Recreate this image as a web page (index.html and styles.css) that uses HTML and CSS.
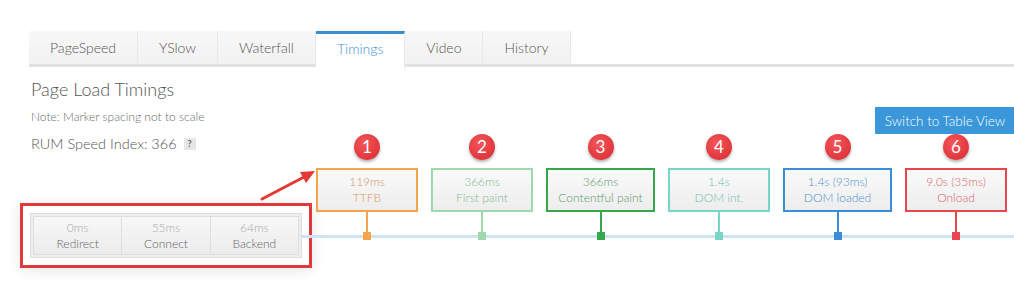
FILE: index.html
```html
<!DOCTYPE html>
<html lang="en">
<head>
  <meta charset="UTF-8">
  <title>Page Load Timings</title>
  <link rel="stylesheet" href="styles.css">
</head>
<body>

  <div class="tabs">
    <div class="tab">PageSpeed</div>
    <div class="tab">YSlow</div>
    <div class="tab">Waterfall</div>
    <div class="tab active">Timings</div>
    <div class="tab">Video</div>
    <div class="tab">History</div>
  </div>

  <div class="main">
    <div class="left">
      <h2>Page Load Timings</h2>
      <p class="note">Note: Marker spacing not to scale</p>
      <p class="rum">RUM Speed Index: 366 <span class="help">?</span></p>

      <!-- fases antes do primeiro byte -->
      <div class="phases">
        <div class="phase"><span class="val">0ms</span><span>Redirect</span></div>
        <div class="phase"><span class="val">55ms</span><span>Connect</span></div>
        <div class="phase"><span class="val">64ms</span><span>Backend</span></div>
      </div>
    </div>

    <div class="right">
      <div class="actions">
        <button class="switch">Switch to Table View</button>
      </div>
      <div class="timeline">
        <div class="mark c-orange">
          <div class="badge">1</div>
          <div class="box">119ms<br>TTFB</div>
          <div class="stem"></div><div class="dot"></div>
        </div>
        <div class="mark c-lgreen">
          <div class="badge">2</div>
          <div class="box">366ms<br>First paint</div>
          <div class="stem"></div><div class="dot"></div>
        </div>
        <div class="mark c-green">
          <div class="badge">3</div>
          <div class="box wide">366ms<br>Contentful paint</div>
          <div class="stem"></div><div class="dot"></div>
        </div>
        <div class="mark c-teal">
          <div class="badge">4</div>
          <div class="box">1.4s<br>DOM int.</div>
          <div class="stem"></div><div class="dot"></div>
        </div>
        <div class="mark c-blue">
          <div class="badge">5</div>
          <div class="box wide">1.4s (93ms)<br>DOM loaded</div>
          <div class="stem"></div><div class="dot"></div>
        </div>
        <div class="mark c-red">
          <div class="badge">6</div>
          <div class="box">9.0s (35ms)<br>Onload</div>
          <div class="stem"></div><div class="dot"></div>
        </div>
      </div>
    </div>
  </div>

  <!-- seta de anotação -->
  <svg class="arrow" width="64" height="40" viewBox="0 0 64 40">
    <line x1="4" y1="34" x2="46" y2="12" stroke="#e53935" stroke-width="3" stroke-linecap="round"/>
    <polygon points="57,6 42,7 48,18" fill="#e53935"/>
  </svg>

</body>
</html>
```

FILE: styles.css
```css
html, body {
  min-height: 296px;
}
body {
  margin: 0;
  font-family: Lato, "Liberation Sans", sans-serif;
  font-weight: 300;
  color: #555;
  background: #fff;
  position: relative;
}

.tabs {
  display: flex;
  margin: 31px 0 0 29px;
  border-bottom: 3px solid #e2e2e2;
  height: 33px;
}
.tab {
  padding: 0 21px;
  font-size: 14px;
  line-height: 33px;
  color: #555;
  background: linear-gradient(#f8f8f8, #f1f1f1);
  border-right: 1px solid #e8e8e8;
}
.tab.active {
  background: #fff;
  color: #3a8fd3;
  border-top: 3px solid #3a8fd3;
  line-height: 30px;
  height: 33px;
  margin-bottom: -3px;
  padding-bottom: 3px;
}

.main {
  display: flex;
  margin-top: 11px;
}

.left {
  width: 272px;
  padding-left: 30px;
  flex-shrink: 0;
}
.left h2 {
  margin: 0 0 0 1px;
  font-size: 18px;
  font-weight: 300;
  line-height: 22px;
  color: #555;
}
.note {
  margin: 9px 0 0 1px;
  font-size: 12px;
  line-height: 16px;
  color: #6a6a6a;
}
.rum {
  margin: 10px 0 0 1px;
  font-size: 14.5px;
  line-height: 18px;
  color: #555;
}
.help {
  display: inline-block;
  width: 12px;
  height: 12px;
  margin-left: 3px;
  background: #e6e6e6;
  color: #666;
  font-size: 9px;
  font-weight: bold;
  line-height: 12px;
  text-align: center;
  vertical-align: 2px;
}

.phases {
  display: flex;
  margin-top: 60px;
  height: 45px;
  box-sizing: border-box;
  border: 1px solid #dcdcdc;
  padding: 2px;
  background: #eee;
  outline: 3px solid #e2383d;
  outline-offset: 7px;
  box-shadow: 0 0 0 10px #fff, 0 2px 14px 9px rgba(0, 0, 0, 0.12);
}
.phase {
  flex: 1;
  display: flex;
  flex-direction: column;
  justify-content: center;
  align-items: center;
  font-size: 12px;
  line-height: 16px;
  color: #666;
  background: linear-gradient(#f7f7f7, #ececec);
  border: 1px solid #dedede;
}
.phase + .phase {
  border-left: none;
}
.phase .val {
  color: #aaa;
}

.right {
  flex: 1;
  margin-top: 29px;
}
.actions {
  display: flex;
  justify-content: flex-end;
}
.switch {
  width: 140px;
  height: 27px;
  margin-right: -1px;
  border: none;
  background: #3997da;
  color: #fff;
  font-family: Lato, "Liberation Sans", sans-serif;
  font-weight: 300;
  font-size: 13.5px;
  padding: 0;
}

.timeline {
  position: relative;
  display: flex;
  gap: 13px;
  padding-left: 14px;
}
.timeline::before {
  content: "";
  position: absolute;
  left: 0;
  right: 0;
  top: 101px;
  height: 3px;
  background: #cfe4f2;
}
.mark {
  position: relative;
  display: flex;
  flex-direction: column;
  align-items: center;
}
.badge {
  width: 26px;
  height: 26px;
  border-radius: 50%;
  background: radial-gradient(circle at 40% 35%, #f4555a, #d62a30);
  box-shadow: 0 2px 3px rgba(0, 0, 0, 0.3);
  color: #fff;
  font-size: 17px;
  font-weight: normal;
  line-height: 26px;
  text-align: center;
}
.box {
  width: 102px;
  height: 44px;
  margin-top: 8px;
  box-sizing: border-box;
  border: 2px solid;
  background: linear-gradient(#fafafa, #ededed);
  font-size: 12px;
  line-height: 16px;
  text-align: center;
  padding-top: 4px;
}
.box.wide {
  width: 109px;
}
.stem {
  width: 2px;
  height: 20px;
}
.dot {
  width: 8px;
  height: 8px;
}

.c-orange .box { border-color: #f6a44c; color: #d9936a; }
.c-orange .stem, .c-orange .dot { background: #f6a44c; }
.c-lgreen .box { border-color: #9fd8aa; color: #84b98e; }
.c-lgreen .stem, .c-lgreen .dot { background: #9fd8aa; }
.c-green .box { border-color: #35a84c; color: #5f9a6b; }
.c-green .stem, .c-green .dot { background: #35a84c; }
.c-teal .box { border-color: #78d6c6; color: #71bdb0; }
.c-teal .stem, .c-teal .dot { background: #78d6c6; }
.c-blue .box { border-color: #3a8dd6; color: #4e8fcf; }
.c-blue .stem, .c-blue .dot { background: #3a8dd6; }
.c-red .box { border-color: #ea4650; color: #e0636b; }
.c-red .stem, .c-red .dot { background: #ea4650; }

.arrow {
  position: absolute;
  left: 258px;
  top: 165px;
}
```
